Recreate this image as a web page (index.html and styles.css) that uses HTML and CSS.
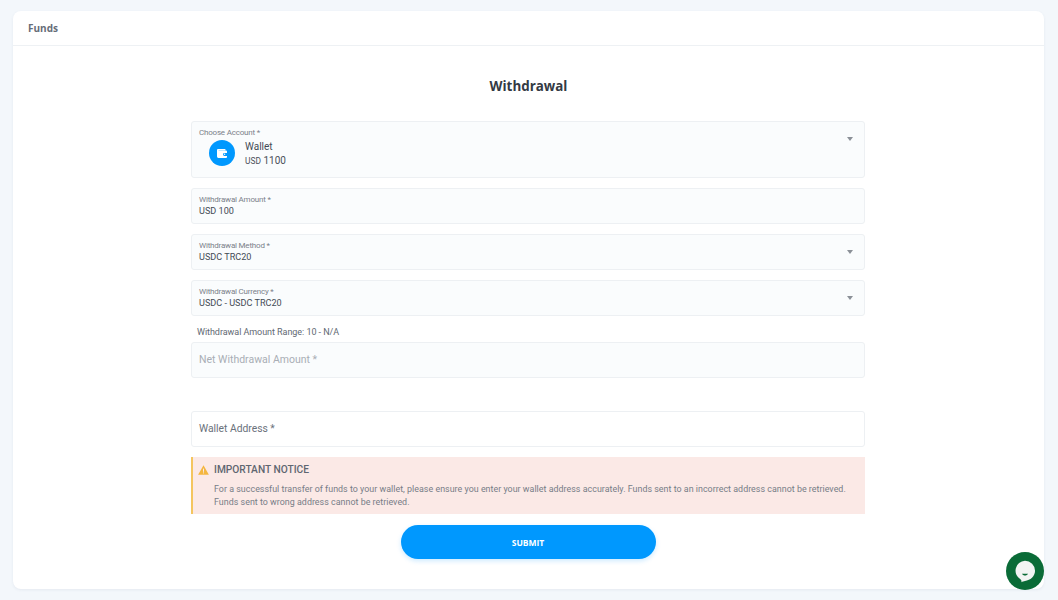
FILE: index.html
```html
<!DOCTYPE html>
<html lang="en">
<head>
  <meta charset="UTF-8">
  <title>Funds</title>
  <link rel="stylesheet" href="styles.css">
</head>
<body>
  <div class="card">
    <div class="card-header">Funds</div>
    <div class="card-body">
      <h2>Withdrawal</h2>
      <form class="form">
        <div class="field field-account">
          <div class="field-label">Choose Account *</div>
          <div class="account">
            <span class="account-icon">
              <svg width="12" height="12" viewBox="0 0 12 12"><path d="M2 2h7.4v1.2H2.6v.4H10a1 1 0 0 1 1 1v1.5H8.4a1.4 1.4 0 0 0 0 2.8H11V10a1 1 0 0 1-1 1H2.4A1.4 1.4 0 0 1 1 9.6V3a1 1 0 0 1 1-1z" fill="#fff"/><circle cx="8.6" cy="7.3" r=".7" fill="#fff"/></svg>
            </span>
            <div class="account-text">
              <div class="account-name">Wallet</div>
              <div class="account-balance"><span class="currency">USD</span> 1100</div>
            </div>
          </div>
          <span class="caret"></span>
        </div>
        <div class="field">
          <div class="field-label">Withdrawal Amount *</div>
          <div class="field-value">USD 100</div>
        </div>
        <div class="field">
          <div class="field-label">Withdrawal Method *</div>
          <div class="field-value">USDC TRC20</div>
          <span class="caret"></span>
        </div>
        <div class="field">
          <div class="field-label">Withdrawal Currency *</div>
          <div class="field-value">USDC - USDC TRC20</div>
          <span class="caret"></span>
        </div>
        <div class="range">Withdrawal Amount Range: 10 - N/A</div>
        <div class="field field-plain field-disabled">Net Withdrawal Amount *</div>
        <div class="field field-plain field-white">Wallet Address *</div>
        <div class="notice">
          <div class="notice-title">
            <svg width="11" height="10" viewBox="0 0 11 10"><path d="M5.5 0.3 10.9 9.7H0.1z" fill="#f4b63f"/><rect x="5" y="3.6" width="1" height="3.2" fill="#fbe9e6"/><rect x="5" y="7.4" width="1" height="1" fill="#fbe9e6"/></svg>
            IMPORTANT NOTICE
          </div>
          <p>For a successful transfer of funds to your wallet, please ensure you enter your wallet address accurately. Funds sent to an incorrect address cannot be retrieved.<br>Funds sent to wrong address cannot be retrieved.</p>
        </div>
        <button type="button" class="submit">SUBMIT</button>
      </form>
    </div>
  </div>
  <div class="chat">
    <svg width="28" height="28" viewBox="0 0 24 24"><path d="M12 3.2a8.6 8.6 0 0 1 8.6 8.6c0 4.8-4 8.2-8.6 8.7-1 .1-2.3.5-3.1 1.1.2-1 0-1.8-.6-2.3A8.6 8.6 0 0 1 12 3.2z" fill="#f2f4f3"/><path d="M9.4 14.4h5.2c-.5 1.1-1.5 1.5-2.6 1.5s-2.1-.4-2.6-1.5z" fill="#0a6b37"/></svg>
  </div>
</body>
</html>
```

FILE: styles.css
```css
body {
  margin: 0;
  height: 600px;
  overflow: hidden;
  background: #f3f7fb;
  font-family: Roboto, sans-serif;
  color: #3f4650;
}
.card {
  margin: 11px 14px 0 13px;
  height: 578px;
  background: white;
  border-radius: 8px;
  box-shadow: 0 1px 3px rgba(60,80,110,0.08);
}
.card-header {
  height: 34px;
  padding-left: 15px;
  line-height: 34px;
  font-family: "Open Sans", sans-serif;
  font-size: 10px;
  font-weight: 700;
  color: #666d78;
  border-bottom: 1px solid #eef1f4;
}
.card-body {
  padding-top: 31px;
}
h2 {
  margin: 0 0 25px;
  height: 19px;
  line-height: 19px;
  text-align: center;
  font-family: "Open Sans", sans-serif;
  font-size: 13.4px;
  font-weight: 700;
  color: #343a44;
}
.form {
  width: 674px;
  margin-left: 178px;
  display: flex;
  flex-direction: column;
}
.field {
  position: relative;
  box-sizing: border-box;
  height: 36px;
  margin-bottom: 10px;
  padding: 6px 7px 0;
  background: #fafcfd;
  border: 1px solid #edf0f3;
  border-radius: 3px;
}
.field-account {
  height: 57px;
}
.field-label {
  font-size: 8px;
  letter-spacing: -0.2px;
  line-height: 10px;
  color: #7b818a;
}
.field-value {
  font-size: 9.1px;
  line-height: 13px;
  color: #444b55;
}
.account {
  display: flex;
  align-items: flex-start;
  gap: 10px;
  padding-left: 10px;
}
.account-icon {
  width: 26px;
  height: 26px;
  margin-top: 2px;
  border-radius: 50%;
  background: #0098fe;
  display: flex;
  align-items: center;
  justify-content: center;
}
.account-text {
  padding-top: 2px;
}
.account-name {
  font-size: 10px;
  line-height: 14px;
  color: #444b55;
}
.account-balance {
  font-size: 10px;
  line-height: 14px;
  color: #4a505a;
}
.currency {
  font-size: 8.4px;
}
.caret {
  position: absolute;
  top: 15px;
  right: 11px;
  border-left: 3.5px solid transparent;
  border-right: 3.5px solid transparent;
  border-top: 4px solid #8b9097;
}
.range {
  margin: 0 0 4px 6px;
  height: 12px;
  line-height: 12px;
  font-size: 9px;
  letter-spacing: -0.05px;
  color: #626973;
}
.field-plain {
  padding: 0 7px;
  line-height: 34px;
  font-size: 10.5px;
}
.field-disabled {
  margin-bottom: 33px;
  color: #a9aeb5;
}
.field-white {
  background: white;
  font-size: 10.3px;
  color: #6a717b;
}
.notice {
  box-sizing: border-box;
  height: 57px;
  margin-bottom: 11px;
  padding: 6px 0 0 5px;
  background: #fbe9e6;
  border-left: 2px solid #f4c55f;
}
.notice-title {
  display: flex;
  align-items: center;
  gap: 5px;
  font-size: 10.2px;
  line-height: 14px;
  font-weight: 500;
  color: #5f6670;
}
.notice p {
  margin: 6px 0 0 16px;
  font-size: 8.9px;
  letter-spacing: 0.025px;
  line-height: 13px;
  color: #777d86;
}
.submit {
  display: block;
  align-self: center;
  width: 255px;
  height: 34px;
  border: none;
  border-radius: 17px;
  background: #0098fe;
  box-shadow: 0 2px 5px rgba(0,152,254,0.2);
  font-family: "Open Sans", sans-serif;
  font-size: 8.5px;
  font-weight: 700;
  color: white;
}
.chat {
  position: absolute;
  left: 1006px;
  top: 552px;
  width: 38px;
  height: 38px;
  border-radius: 50%;
  background: #0a6b37;
  display: flex;
  align-items: center;
  justify-content: center;
}
```
